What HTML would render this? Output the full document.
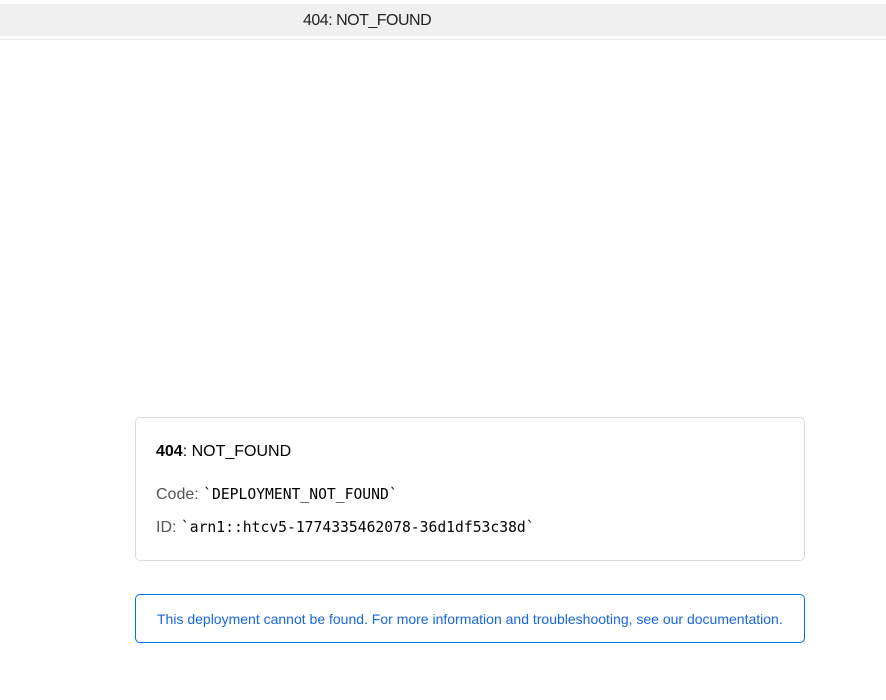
<!DOCTYPE html>
<html><head><meta charset="utf-8"><style>
html,body{margin:0;padding:0;background:#fff;width:886px;height:700px;overflow:hidden;font-family:"Liberation Sans",Arial,sans-serif;}
.bar{position:absolute;left:0;top:4px;width:886px;height:32px;background:#f0f0f0;}
.bar span{position:absolute;left:303px;top:8px;font-size:16px;color:#222;letter-spacing:-0.5px;}
.line{position:absolute;left:0;top:39px;width:886px;height:1px;background:#e8e8e8;}
.card{position:absolute;left:135px;top:417px;width:668px;height:142px;border:1px solid #dcdcdc;border-radius:5px;}
.t{position:absolute;left:20px;font-size:16px;color:#000;}
.c{position:absolute;left:20px;font-size:16px;color:#555;}
.m{font-family:"DejaVu Sans Mono","Liberation Mono",monospace;font-size:14.7px;color:#000;}
.info{position:absolute;left:135px;top:594px;width:668px;height:47px;border:1px solid #0070f3;border-radius:5px;}
.info span{position:absolute;left:21px;top:16px;font-size:14px;color:#1a66e0;}
</style></head><body>
<div class="bar"><span>404: NOT_FOUND</span></div>
<div class="line"></div>
<div class="card">
<div class="t" style="top:25px"><b>404</b>: NOT_FOUND</div>
<div class="c" style="top:68px">Code: <span class="m">`DEPLOYMENT_NOT_FOUND`</span></div>
<div class="c" style="top:101px">ID: <span class="m">`arn1::htcv5-1774335462078-36d1df53c38d`</span></div>
</div>
<div class="info"><span>This deployment cannot be found. For more information and troubleshooting, see our documentation.</span></div>
</body></html>
